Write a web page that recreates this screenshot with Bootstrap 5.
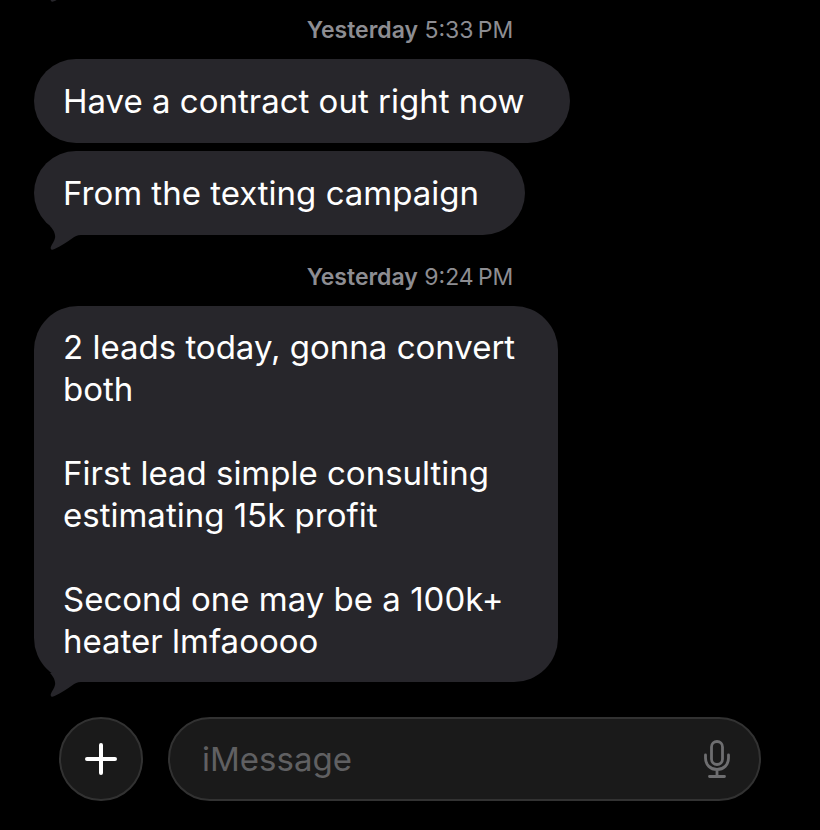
<!DOCTYPE html>
<html lang="en" data-bs-theme="dark">
<head>
<meta charset="utf-8">
<meta name="viewport" content="width=device-width, initial-scale=1">
<title>Messages</title>
<link href="https://cdn.jsdelivr.net/npm/bootstrap@5.3.0/dist/css/bootstrap.min.css" rel="stylesheet">
<style>
  body { background: #000; color: #fff; font-family: Inter, "Liberation Sans", sans-serif; }
  .thread { padding: 0 34px; }
  .stamp { color: #8d8d92; font-size: 23px; line-height: 28px; }
  .stamp-first { margin: 14px 0 15px; }
  .stamp-next { margin: 28px 0 15px; }
  .bubble { background: #27262b; border-radius: 42px; padding: 21px 46px 21px 29px; font-size: 33px; line-height: 42px; }
  .bubble-long { padding: 20px 43px 20px 29px; border-radius: 44px; }
  .bubble-gap { margin-bottom: 8px; }
  .tail { left: 16px; bottom: -15px; width: 32px; height: 24px; fill: #27262b; }
  .earlier { height: 2px; }
  .earlier .tail { bottom: 0; }
  .composer { gap: 25px; padding: 35px 59px 28px; }
  .round-btn { width: 84px; height: 84px; background: #1a1a1a; border: 2px solid #323232; color: #fff; }
  .field { background: #1a1a1a; border: 2px solid #323232; height: 84px; padding: 0 28px 0 32px; }
  .field input { color: #fff; font-size: 33px; line-height: 42px; }
  .field input::placeholder { color: #606062; opacity: 1; }
  .field input:focus { outline: 0; }
  .mic { color: #6e6e70; }
</style>
</head>
<body>
<svg class="d-none" aria-hidden="true">
  <symbol id="tail" viewBox="0 0 32 24"><path d="M0 0C2 2 6 7 5 12C4.500 15 2 18 1 20.500C0 23 1.500 24.500 4 23.300C11 20 17 16 22 12.500C25 10.200 27 9 31 9L31 0Z"/></symbol>
</svg>
<main class="thread d-flex flex-column align-items-start">
  <div class="earlier position-relative w-100 overflow-hidden"><svg class="tail position-absolute" aria-hidden="true"><use href="#tail"/></svg></div>
  <div class="stamp stamp-first align-self-center"><span class="fw-semibold">Yesterday</span> 5:33&#8201;PM</div>
  <div class="bubble bubble-gap">Have a contract out right now</div>
  <div class="bubble position-relative">From the texting campaign<svg class="tail position-absolute" aria-hidden="true"><use href="#tail"/></svg></div>
  <div class="stamp stamp-next align-self-center"><span class="fw-semibold">Yesterday</span> 9:24&#8201;PM</div>
  <div class="bubble bubble-long position-relative">2 leads today, gonna convert<br>both<br><br>First lead simple consulting<br>estimating 15k profit<br><br>Second one may be a 100k+<br>heater lmfaoooo<svg class="tail position-absolute" aria-hidden="true"><use href="#tail"/></svg></div>
</main>
<form class="composer d-flex align-items-center">
  <button type="button" class="round-btn rounded-circle p-0 d-flex align-items-center justify-content-center flex-shrink-0" aria-label="Add attachment">
    <svg width="34" height="34" viewBox="0 0 34 34" fill="none" stroke="currentColor" stroke-width="4" stroke-linecap="round" aria-hidden="true"><path d="M17 3V31M3 17H31"/></svg>
  </button>
  <div class="field rounded-pill d-flex align-items-center flex-grow-1">
    <input type="text" class="bg-transparent border-0 p-0 flex-grow-1 w-100" placeholder="iMessage" aria-label="iMessage">
    <button type="button" class="mic btn border-0 p-0 d-flex" aria-label="Dictate">
      <svg width="28" height="40" viewBox="0 0 28 40" fill="none" stroke="currentColor" stroke-width="2.800" stroke-linecap="round" aria-hidden="true"><rect x="8.500" y="2.500" width="11" height="23" rx="5.500"/><path d="M2.500 16V19C2.500 26 7.500 30.500 14 30.500S25.500 26 25.500 19V16M14 30.500V37.500M6.500 37.500H21.500"/></svg>
    </button>
  </div>
</form>
<script src="https://cdn.jsdelivr.net/npm/bootstrap@5.3.0/dist/js/bootstrap.bundle.min.js"></script>
</body>
</html>
